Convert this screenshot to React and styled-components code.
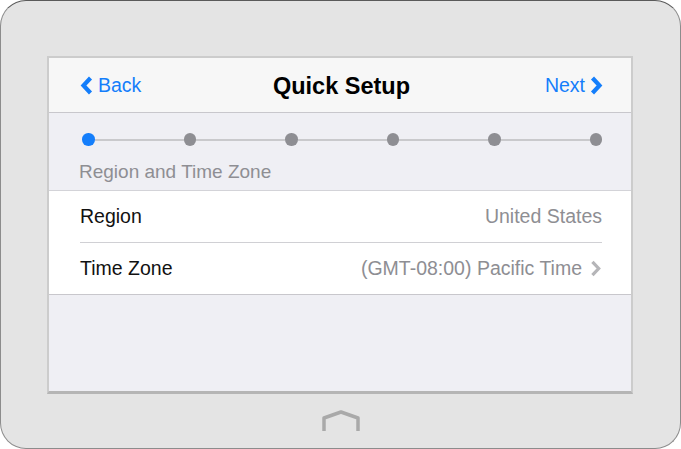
import { Fragment } from "react";
import styled, { createGlobalStyle } from "styled-components";

const GlobalStyle = createGlobalStyle`
  html, body {
    margin: 0;
    padding: 0;
    background: #ffffff;
  }
  body {
    font-family: "Liberation Sans", Arial, Helvetica, sans-serif;
  }
  * {
    box-sizing: border-box;
  }
`;

const Device = styled.div`
  width: 681px;
  height: 449px;
  background: #e4e4e4;
  border: 1px solid #8c8c8c;
  border-top-color: #5a5a5a;
  border-radius: 26px;
  padding: 55px 47px 0 46px;
  display: flex;
  flex-direction: column;
  align-items: stretch;
`;

const Screen = styled.div`
  height: 338px;
  border: 2px solid #cccccc;
  border-bottom: 3px solid #b5b5b5;
  background: #efeff4;
  display: flex;
  flex-direction: column;
`;

const NavBar = styled.div`
  height: 55px;
  flex-shrink: 0;
  background: #f7f7f7;
  border-bottom: 1px solid #c8c7cc;
  display: grid;
  grid-template-columns: 1fr auto 1fr;
  align-items: center;
  padding: 0 28px 0 31px;
`;

const NavButton = styled.div`
  display: flex;
  align-items: center;
  justify-self: ${({ $end }) => ($end ? "end" : "start")};
  gap: 5px;
  color: #147efb;
  font-size: 19.5px;
  line-height: 24px;
`;

const Title = styled.div`
  font-size: 23.5px;
  font-weight: 700;
  color: #000;
  line-height: 28px;
  padding-top: 2px;
`;

const Progress = styled.div`
  height: 78px;
  flex-shrink: 0;
  border-bottom: 1px solid #d3d3d8;
  padding: 20px 29px 0 33px;
`;

const Steps = styled.div`
  display: flex;
  align-items: center;
  height: 13px;
`;

const Dot = styled.span`
  width: 12.5px;
  height: 12.5px;
  border-radius: 50%;
  flex-shrink: 0;
  background: ${({ $active }) => ($active ? "#147efb" : "#8e8e93")};
`;

const Connector = styled.span`
  flex: 1;
  height: 2px;
  background: #c9c9cc;
`;

const StepLabel = styled.div`
  margin: 16px 0 0 -3px;
  font-size: 19px;
  line-height: 20px;
  color: #8e8e93;
`;

const List = styled.div`
  background: #ffffff;
  border-bottom: 1px solid #c8c7cc;
  flex-shrink: 0;
`;

const Row = styled.div`
  height: ${({ $last }) => ($last ? "51px" : "52px")};
  margin-left: 31px;
  margin-right: ${({ $last }) => ($last ? "0" : "29px")};
  padding-right: ${({ $last }) => ($last ? "29px" : "0")};
  display: flex;
  align-items: center;
  justify-content: space-between;
  border-bottom: ${({ $last }) => ($last ? "none" : "1px solid #d0d0d4")};
  font-size: 19.5px;
`;

const RowLabel = styled.span`
  color: #111;
`;

const RowValue = styled.span`
  display: flex;
  align-items: center;
  gap: 8px;
  color: #8e8e93;
`;

const Filler = styled.div`
  flex: 1;
  background: #efeff4;
`;

const HomeBar = styled.div`
  display: flex;
  justify-content: center;
  padding: 16px 0 0 2px;
`;

function Chevron({ dir = "right", color, width = 13, height = 19, stroke = 4.2 }) {
  const points = dir === "left" ? "10.5,2 3.5,9.5 10.5,17" : "2.5,2 9.5,9.5 2.5,17";
  return (
    <svg width={width} height={height} viewBox="0 0 13 19">
      <polyline
        points={points}
        fill="none"
        stroke={color}
        strokeWidth={stroke}
        strokeLinecap="butt"
        strokeLinejoin="miter"
      />
    </svg>
  );
}

function HomeIcon() {
  return (
    <svg width="40" height="22" viewBox="0 0 40 22">
      <polyline
        points="3,21 3,8 20,2 37,8 37,21"
        fill="none"
        stroke="#a9a9a9"
        strokeWidth="3.5"
        strokeLinejoin="round"
      />
    </svg>
  );
}

const steps = [true, false, false, false, false, false];

export default function App() {
  return (
    <>
      <GlobalStyle />
      <Device>
        <Screen>
          <NavBar>
            <NavButton>
              <Chevron dir="left" color="#147efb" />
              Back
            </NavButton>
            <Title>Quick Setup</Title>
            <NavButton $end>
              Next
              <Chevron dir="right" color="#147efb" />
            </NavButton>
          </NavBar>
          <Progress>
            <Steps>
              {steps.map((active, i) => (
                <Fragment key={i}>
                  {i > 0 && <Connector />}
                  <Dot $active={active} />
                </Fragment>
              ))}
            </Steps>
            <StepLabel>Region and Time Zone</StepLabel>
          </Progress>
          <List>
            <Row>
              <RowLabel>Region</RowLabel>
              <RowValue>United States</RowValue>
            </Row>
            <Row $last>
              <RowLabel>Time Zone</RowLabel>
              <RowValue>
                (GMT-08:00) Pacific Time
                <Chevron dir="right" color="#b5b5b8" width={12} height={17} stroke={3.6} />
              </RowValue>
            </Row>
          </List>
          <Filler />
        </Screen>
        <HomeBar>
          <HomeIcon />
        </HomeBar>
      </Device>
    </>
  );
}
